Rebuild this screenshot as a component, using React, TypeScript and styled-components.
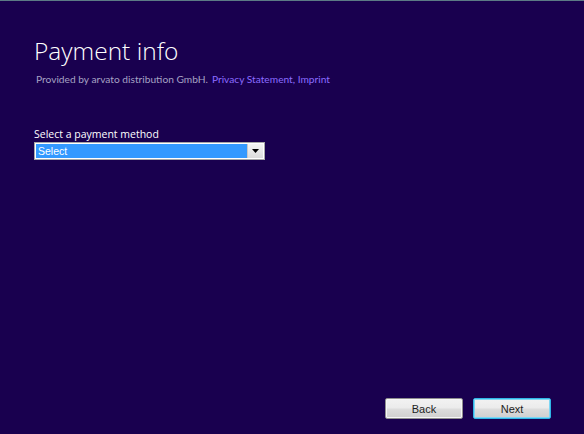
import React, {useState} from 'react';
import styled, {createGlobalStyle} from 'styled-components';

const GlobalStyle = createGlobalStyle`
  html, body {
    margin: 0;
    padding: 0;
    background: #19004f;
  }
  #root {
    height: 434px;
  }
`;

const Window = styled.div`
  display: flex;
  flex-direction: column;
  width: 584px;
  height: 434px;
  box-sizing: border-box;
  border-top: 1px solid #5c7a86;
  background: #19004f;
  font-family: 'Open Sans', 'Liberation Sans', sans-serif;
  color: #ffffff;
`;

const Content = styled.div`
  flex: 1;
  display: flex;
  flex-direction: column;
  padding: 32px 0 0 34px;
`;

const Title = styled.h1`
  margin: 0;
  font-family: 'Open Sans', sans-serif;
  font-weight: 300;
  font-size: 24.5px;
  line-height: 36px;
  color: #ffffff;
`;

const Provider = styled.div`
  margin: 3px 0 0 2px;
  font-family: Lato, 'Open Sans', sans-serif;
  font-size: 10.2px;
  line-height: 14px;
  color: #a6a2c4;
`;

const Link = styled.a`
  margin-left: 4px;
  color: #8b6cff;
  text-decoration: none;
  cursor: pointer;
`;

const Field = styled.div`
  display: flex;
  flex-direction: column;
  margin-top: 41px;
`;

const Label = styled.label`
  font-size: 10.5px;
  line-height: 14px;
  color: #ffffff;
  margin-bottom: 1px;
`;

const SelectBox = styled.div`
  display: flex;
  width: 231px;
  height: 18px;
  box-sizing: border-box;
  border: 1px solid #a7a7a7;
  background: #ffffff;
  padding: 1px;
`;

const SelectValue = styled.div`
  flex: 1;
  background: #3399ff;
  color: #ffffff;
  font-family: 'Liberation Sans', Arial, sans-serif;
  font-size: 10.5px;
  line-height: 14px;
  padding-left: 2px;
`;

const ArrowButton = styled.div`
  width: 15px;
  display: flex;
  align-items: center;
  justify-content: center;
  background: linear-gradient(#f4f4f4, #dcdcdc);
  border-left: 1px solid #c8c8c8;
`;

const Footer = styled.div`
  display: flex;
  justify-content: flex-end;
  gap: 10px;
  padding: 0 33px 15px 0;
`;

const Button = styled.button<{ $focused?: boolean }>`
  width: 78px;
  height: 21px;
  box-sizing: border-box;
  border: 1px solid ${p => p.$focused ? '#2fb6e6' : '#8f8f8f'};
  box-shadow: inset 0 0 0 1px ${p => p.$focused ? '#7fd6f4' : '#f6f6f6'};
  border-radius: 2px;
  background: linear-gradient(#f2f2f2 0%, #ebebeb 48%, #dddddd 52%, #cfcfcf 100%);
  font-family: 'Liberation Sans', Arial, sans-serif;
  font-size: 11px;
  color: #1e1e1e;
  padding: 0;
  cursor: pointer;
`;

const App: React.FC = () => {
    const [method] = useState('Select');
    return (
        <Window>
            <GlobalStyle/>
            <Content>
                <Title>Payment info</Title>
                <Provider>
                    Provided by arvato distribution GmbH.
                    <Link>Privacy Statement, Imprint</Link>
                </Provider>
                <Field>
                    <Label>Select a payment method</Label>
                    <SelectBox>
                        <SelectValue>{method}</SelectValue>
                        <ArrowButton>
                            <svg width="7" height="4" viewBox="0 0 7 4">
                                <polygon points="0,0 7,0 3.5,4" fill="#000"/>
                            </svg>
                        </ArrowButton>
                    </SelectBox>
                </Field>
            </Content>
            <Footer>
                <Button>Back</Button>
                <Button $focused>Next</Button>
            </Footer>
        </Window>
    );
};

export default App;
